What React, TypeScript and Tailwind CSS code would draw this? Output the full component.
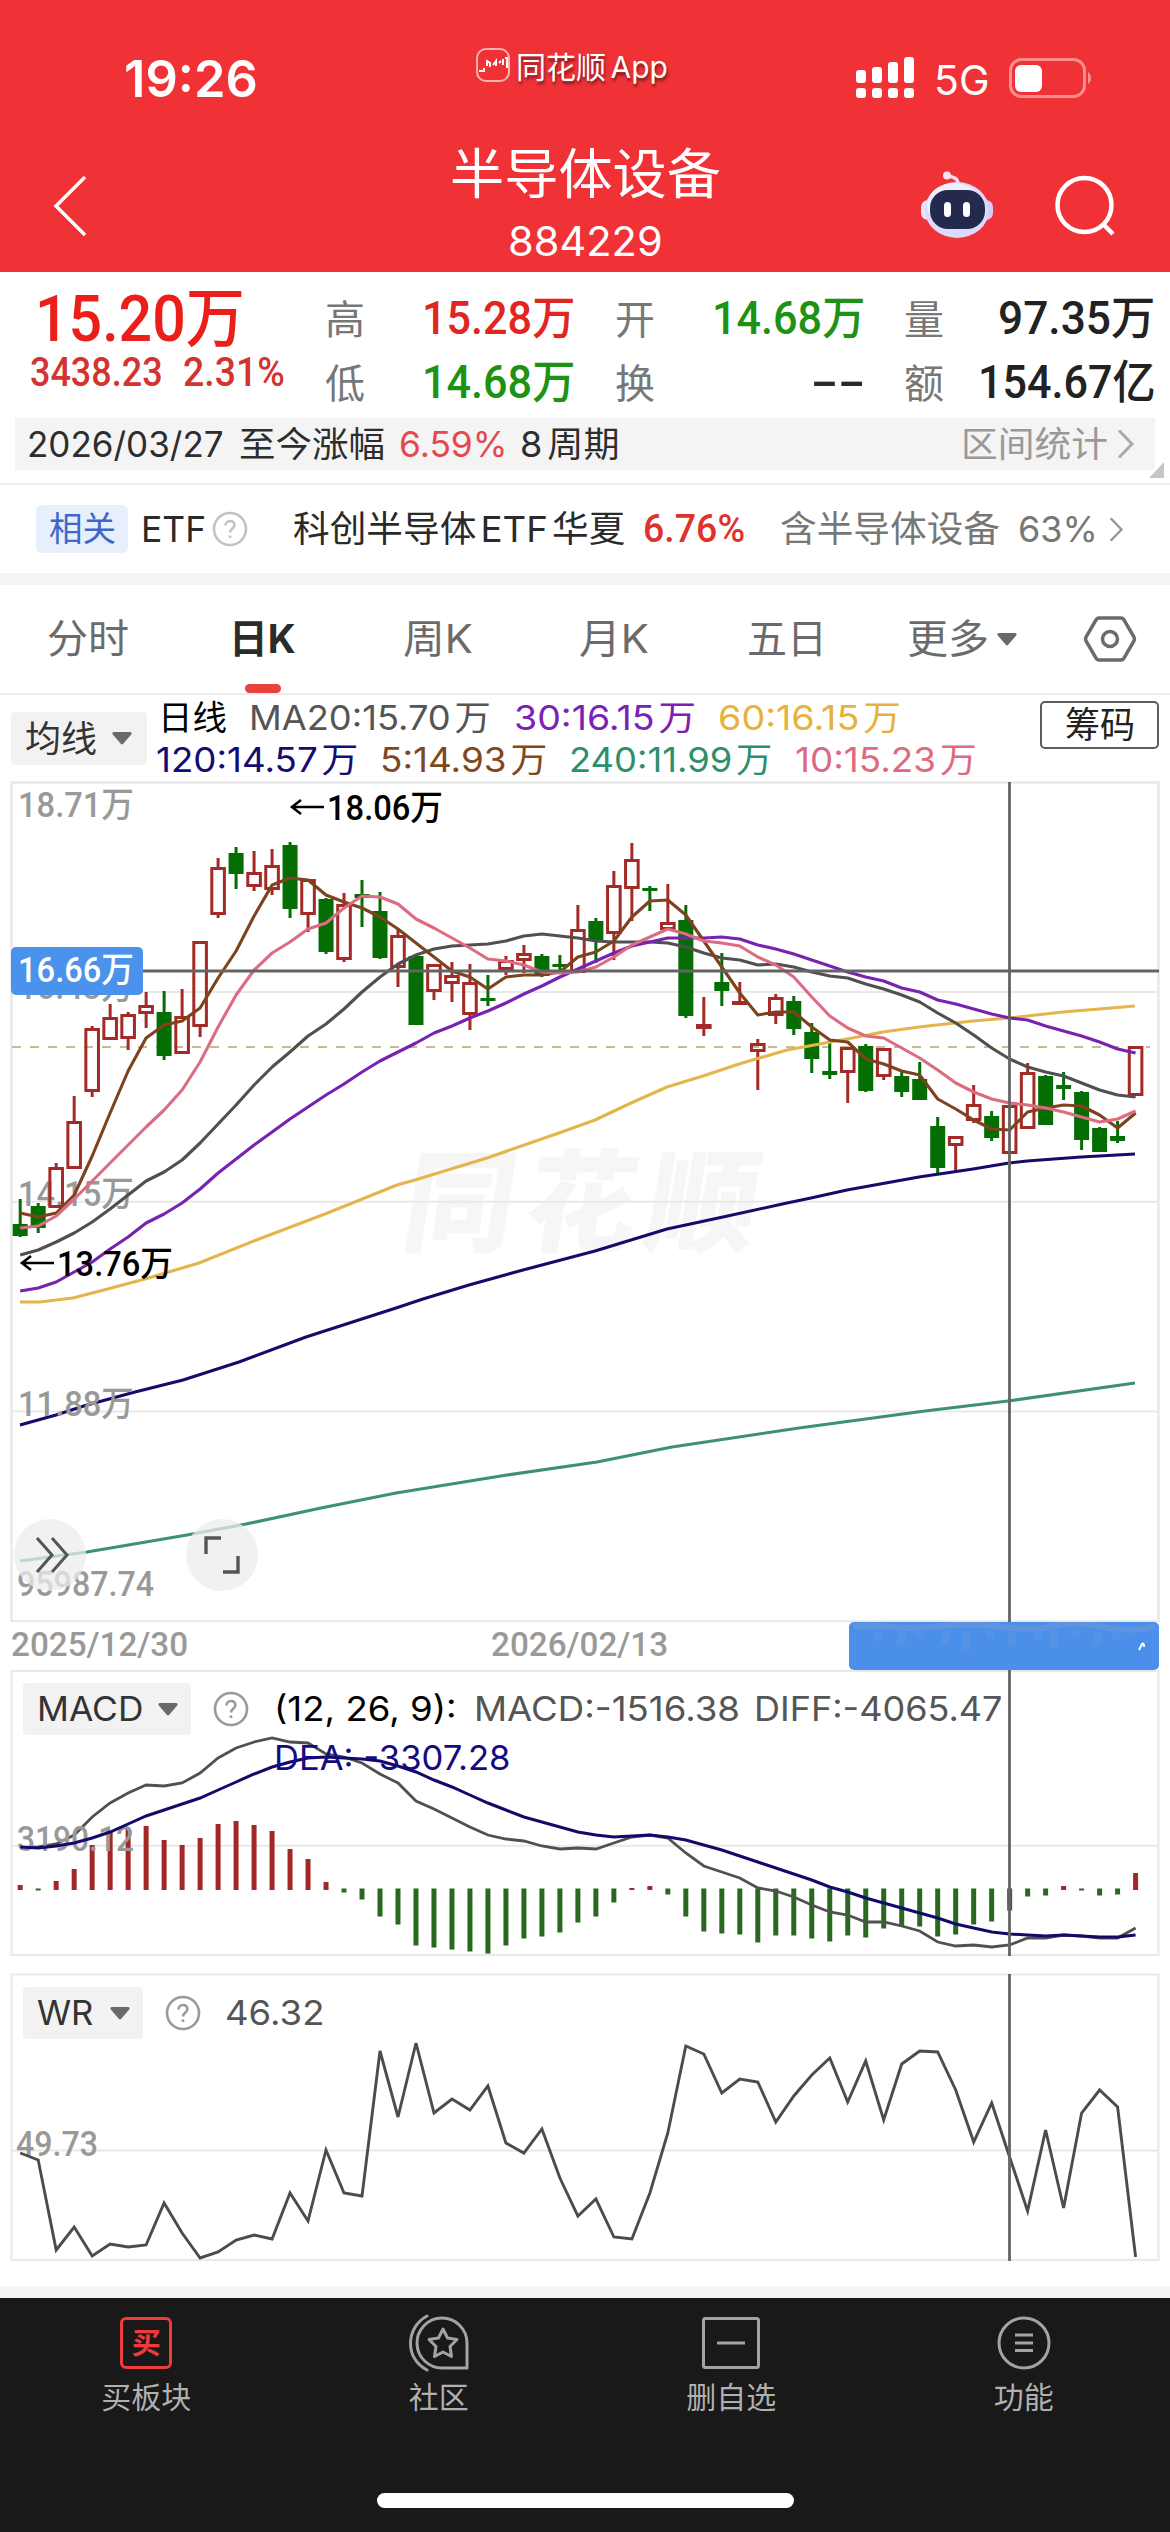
import React, { useLayoutEffect, useRef, useState } from 'react';

interface FitProps {
  w: number;
  className?: string;
  children: React.ReactNode;
}

// one line of text squeezed or stretched to a fixed width
function Fit({ w, className = '', children }: FitProps) {
  const ref = useRef<HTMLSpanElement>(null);
  const [scale, setScale] = useState(1);

  useLayoutEffect(() => {
    if (ref.current) setScale(w / ref.current.offsetWidth);
  }, [w, children]);

  return (
    <span className={'block shrink-0 whitespace-pre leading-none ' + className} style={{ width: w }}>
      <span ref={ref} className="inline-block origin-left" style={{ transform: `scaleX(${scale})` }}>
        {children}
      </span>
    </span>
  );
}

const STEP = 17.99;
const xAt = (i: number) => 20.2 + STEP * i;
const toPoints = (ys: number[]) => ys.map((y, i) => `${xAt(i).toFixed(1)},${y}`).join(' ');

// [up, bodyTop, bodyBottom, high, low]
const candles: number[][] = [
  [0, 444, 456, 419, 457], [0, 426, 448, 423, 453], [1, 387, 428, 383, 428], [1, 341, 389, 316, 389],
  [1, 248, 312, 246, 317], [1, 237, 260, 224, 260], [1, 234, 259, 232, 270], [1, 225, 234, 212, 248],
  [0, 232, 276, 211, 280], [1, 236, 274, 209, 274], [1, 161, 247, 161, 257], [1, 87, 135, 78, 138],
  [0, 73, 94, 67, 109], [1, 92, 107, 71, 111], [1, 85, 110, 69, 115], [0, 65, 129, 62, 138],
  [1, 99, 135, 99, 152], [0, 119, 172, 118, 174], [1, 124, 180, 113, 182], [0, 114, 118, 100, 147],
  [0, 131, 178, 112, 179], [1, 155, 188, 150, 207], [0, 176, 245, 176, 245], [1, 184, 212, 184, 220],
  [1, 195, 204, 182, 222], [1, 202, 235, 184, 250], [0, 218, 221, 195, 226], [1, 180, 190, 176, 195],
  [1, 173, 181, 165, 193], [0, 176, 196, 174, 197], [0, 184, 187, 175, 190], [1, 149, 193, 125, 193],
  [0, 141, 161, 138, 183], [1, 105, 154, 91, 180], [1, 79, 109, 63, 141], [0, 108, 111, 106, 131],
  [1, 142, 150, 104, 150], [0, 140, 236, 125, 238], [1, 244, 249, 217, 256], [0, 202, 211, 173, 226],
  [1, 221, 224, 202, 225], [1, 263, 272, 259, 310], [1, 217, 236, 214, 244], [0, 221, 249, 216, 255],
  [0, 252, 279, 243, 293], [0, 291, 295, 263, 299], [1, 267, 293, 267, 323], [0, 266, 311, 264, 312],
  [1, 268, 297, 268, 300], [0, 296, 312, 290, 317], [0, 299, 320, 282, 320], [0, 346, 388, 337, 395],
  [1, 356, 366, 356, 393], [1, 324, 341, 305, 343], [0, 336, 358, 331, 361], [1, 325, 374, 325, 374],
  [1, 292, 349, 283, 349], [0, 296, 345, 295, 345], [0, 305, 309, 292, 320], [0, 312, 360, 311, 370],
  [0, 348, 372, 347, 372], [0, 356, 361, 341, 363], [1, 266, 316, 266, 316],
];

const ma5 = [433, 437, 433, 415, 376, 333, 291, 258, 245, 241, 228, 198, 171, 136, 105, 98, 100, 115, 122, 128, 137, 149, 163, 177, 191, 197, 209, 197, 195, 195, 192, 177, 172, 161, 137, 121, 120, 135, 161, 187, 213, 235, 232, 232, 247, 260, 262, 279, 284, 291, 295, 319, 329, 340, 349, 350, 332, 328, 325, 326, 335, 348, 333];
const ma10 = [448, 446, 436, 419, 401, 383, 365, 347, 330, 310, 282, 247, 215, 190, 173, 162, 149, 143, 128, 116, 117, 124, 139, 148, 158, 168, 179, 181, 185, 192, 193, 192, 187, 177, 165, 157, 149, 154, 161, 163, 166, 177, 185, 197, 217, 236, 248, 256, 258, 268, 278, 290, 303, 312, 319, 323, 325, 328, 332, 337, 342, 339, 331];
const ma20 = [475, 470, 462, 453, 442, 429, 415, 401, 392, 380, 363, 344, 325, 305, 287, 272, 256, 244, 229, 212, 197, 184, 175, 169, 166, 165, 164, 161, 156, 154, 156, 158, 161, 162, 162, 162, 163, 167, 173, 178, 180, 185, 184, 187, 192, 196, 198, 204, 209, 215, 222, 233, 243, 255, 268, 279, 287, 292, 296, 303, 310, 315, 317];
const ma30 = [511, 508, 502, 492, 482, 469, 457, 443, 434, 423, 409, 393, 379, 365, 352, 339, 327, 315, 304, 292, 281, 272, 263, 253, 246, 238, 231, 223, 214, 206, 197, 189, 181, 173, 166, 162, 158, 158, 158, 157, 159, 165, 169, 174, 180, 186, 192, 197, 201, 208, 212, 220, 224, 229, 234, 238, 240, 246, 251, 256, 262, 269, 273];

const ma60 = '20,522 40,522 56,520 73,518 100,511 145,499 199,483 259,459 325,434 397,405 415,400 487,378 559,353 595,340 631,323 667,307 703,296 739,284 787,270 847,259 883,252 919,247 955,243 973,241 1009,238 1063,232 1135,226';
const ma120 = '20,645 56,635 87,625 135,612 183,600 239,582 306,557 396,528 423,519 469,505 523,490 595,471 667,449 723,437 787,423 811,418 847,410 919,397 973,389 1009,383 1027,381 1081,377 1135,374';
const ma240 = '20,781 87,772 187,755 246,744 321,728 396,713 507,695 597,682 672,667 799,648 925,631 1008,621 1135,603';

const bars = [4, -1, 8, 20, 44, 58, 60, 63, 49, 44, 51, 65, 68, 64, 58, 40, 30, 7, -3, -10, -27, -35, -56, -58, -60, -62, -64, -56, -49, -47, -43, -33, -27, -13, 1, 3, -5, -27, -42, -44, -45, -53, -46, -46, -49, -52, -46, -48, -39, -37, -37, -47, -45, -35, -32, -21, -7, -6, 3, -1, -6, -5, 16];
const diff = [188, 187, 184, 175, 157, 143, 133, 125, 126, 123, 113, 98, 88, 82, 78, 82, 83, 94, 97, 103, 114, 123, 141, 149, 158, 167, 175, 179, 181, 186, 189, 188, 189, 183, 177, 175, 178, 193, 206, 212, 218, 228, 231, 237, 245, 252, 255, 262, 262, 266, 271, 282, 286, 285, 287, 285, 278, 278, 275, 276, 278, 278, 268];
const dea = [187, 188, 186, 183, 178, 172, 164, 156, 150, 144, 138, 130, 122, 114, 107, 102, 98, 97, 98, 99, 101, 106, 112, 120, 127, 135, 143, 150, 157, 162, 167, 172, 175, 177, 176, 175, 177, 180, 185, 190, 196, 202, 208, 214, 220, 227, 232, 238, 243, 248, 253, 258, 264, 268, 272, 274, 275, 276, 275, 276, 277, 277, 275];
const wr = [193, 200, 290, 267, 296, 284, 287, 285, 243, 273, 298, 292, 280, 275, 279, 233, 261, 190, 233, 236, 91, 157, 83, 153, 139, 150, 126, 183, 193, 169, 218, 256, 239, 277, 279, 233, 173, 86, 94, 133, 119, 122, 162, 136, 115, 98, 142, 101, 160, 104, 91, 92, 130, 182, 143, 197, 251, 170, 248, 153, 130, 147, 297];

const tabs = [
  { label: '分时', w: 82, box: 'w-[175px]' },
  { label: '日K', w: 67, box: 'w-[175px]', active: true },
  { label: '周K', w: 70, box: 'w-[175px]' },
  { label: '月K', w: 70, box: 'w-[178px]' },
  { label: '五日', w: 80, box: 'w-[168px]' },
];

function Help({ className = '' }: { className?: string }) {
  return (
    <svg viewBox="0 0 36 36" className={'size-9 shrink-0 ' + className} fill="none" stroke="currentColor" strokeWidth="2.6">
      <circle cx="18" cy="18" r="16" />
      <path d="M13.5 14.5c0-6 9-6 9-.5 0 3.500-4.500 3.500-4.500 7.500M18 24.500v2.600" />
    </svg>
  );
}

function Caret({ className = '' }: { className?: string }) {
  return (
    <svg viewBox="0 0 20 13" className={'h-[13px] w-5 shrink-0 ' + className}>
      <path d="M2 0h16a1.500 1.500 0 0 1 1.200 2.500L11 12a1.500 1.500 0 0 1-2 0L.8 2.500A1.500 1.500 0 0 1 2 0z" fill="#6a6a6a" />
    </svg>
  );
}

function Chevron({ className = '' }: { className?: string }) {
  return (
    <svg viewBox="0 0 20 30" className={'shrink-0 ' + className} fill="none" stroke="currentColor" strokeWidth="3">
      <path d="M3 1.500l13 13.500L3 28.500" />
    </svg>
  );
}

function StatusBar() {
  return (
    <div className="flex h-[118px] items-start text-white">
      <Fit w={134} className="ml-[124px] mt-[53px] text-[51px] font-semibold">19:26</Fit>
      <svg viewBox="0 0 34 34" className="ml-[218px] mt-[48px] size-[34px]" fill="none" stroke="#fbb3b0">
        <rect x="1" y="1" width="32" height="32" rx="9" strokeWidth="2" />
        <path d="M3 23h5v-3M11 18v-5l3 2v4M17 17l3-4v5M23 15l2-2M27 11v6M29 10h2v10" stroke="#fff" strokeWidth="2" />
      </svg>
      <Fit w={152} className="ml-[6px] mt-[52px] text-[30px] [text-shadow:1px_3px_3px_rgba(0,0,0,0.5)] [word-spacing:-4px]">同花顺 App</Fit>
      <svg viewBox="0 0 60 42" className="ml-[188px] mt-[57px] h-[42px] w-[60px]" fill="#fff">
        <rect x="0" y="13" width="10" height="13" rx="3" />
        <rect x="16" y="10" width="10" height="16" rx="3" />
        <rect x="32" y="5" width="10" height="21" rx="3" />
        <rect x="48" y="0" width="10" height="26" rx="3" />
        <rect x="0" y="31" width="10" height="10" rx="3" />
        <rect x="16" y="31" width="10" height="10" rx="3" />
        <rect x="32" y="31" width="10" height="10" rx="3" />
        <rect x="48" y="31" width="10" height="10" rx="3" />
      </svg>
      <Fit w={56} className="ml-[18px] mt-[60px] text-[41px]">5G</Fit>
      <svg viewBox="0 0 84 40" className="ml-[19px] mt-[58px] h-[40px] w-[84px]" fill="none">
        <rect x="1.500" y="1.500" width="74" height="37" rx="11" stroke="#fa8f8f" strokeWidth="3" />
        <path d="M79 14c4 2 4 10 0 12z" fill="#fa8f8f" />
        <rect x="6" y="7" width="27" height="27" rx="6" fill="#fff" />
      </svg>
    </div>
  );
}

function Robot() {
  return (
    <svg viewBox="0 0 74 68" className="h-[68px] w-[74px]">
      <path d="M38 13c0-6-5-7-9-8" fill="none" stroke="#fbdcea" strokeWidth="3.500" />
      <circle cx="27" cy="4.500" r="4" fill="#fbe4ef" />
      <rect x="1" y="29" width="14" height="20" rx="7" fill="#e9e4fb" />
      <rect x="59" y="29" width="14" height="20" rx="7" fill="#d3ccfb" />
      <ellipse cx="37" cy="39" rx="32" ry="28" fill="#dcd9fa" />
      <ellipse cx="34" cy="34" rx="27" ry="22" fill="#f1eefd" />
      <rect x="10" y="19" width="55" height="39" rx="18" fill="#232a4d" />
      <rect x="24" y="31" width="7" height="15" rx="3.500" fill="#fff" />
      <rect x="43" y="31" width="7" height="15" rx="3.500" fill="#fff" />
    </svg>
  );
}

function Header() {
  return (
    <header className="h-[272px] bg-[#f03237]">
      <StatusBar />
      <div className="flex text-white">
        <svg viewBox="0 0 36 64" className="ml-[52px] mt-[56px] h-[64px] w-[36px]" fill="none" stroke="#fff" strokeWidth="3.500">
          <path d="M33 3L4 32l29 29" />
        </svg>
        <div className="ml-[357px] flex w-[280px] flex-col items-center">
          <Fit w={271} className="mt-[30px] text-[54px]">半导体设备</Fit>
          <Fit w={155} className="mt-[19px] text-[41px]">884229</Fit>
        </div>
        <div className="ml-[195px] mt-[53px]">
          <Robot />
        </div>
        <svg viewBox="0 0 64 64" className="ml-[59px] mt-[56px] size-16" fill="none" stroke="#fff" strokeWidth="4.500">
          <circle cx="31.500" cy="31" r="27" />
          <path d="M50 50l10 10" />
        </svg>
      </div>
    </header>
  );
}

interface QuoteProps {
  label: string;
  value: string;
  w: number;
  color: string;
  box: string;
}

function Quote({ label, value, w, color, box }: QuoteProps) {
  return (
    <div className={'flex h-16 items-center justify-between ' + box}>
      <Fit w={40} className="mt-[3px] text-[40px] text-[#777]">{label}</Fit>
      <Fit w={w} className={'font-[Roboto,Noto_Sans_CJK_SC,sans-serif] text-[46px] font-medium ' + color}>{value}</Fit>
    </div>
  );
}

function QuotePanel() {
  return (
    <section className="h-[211px]">
      <div className="flex h-[146px]">
        <div className="w-[325px] font-[Roboto,Noto_Sans_CJK_SC,sans-serif] font-medium">
          <Fit w={210} className="ml-[35px] mt-[15px] text-[65px] text-[#ea1f1a]">15.20万</Fit>
          <div className="mt-[1px] flex text-[40px] text-[#d3342f]">
            <Fit w={133} className="ml-[30px]">3438.23</Fit>
            <Fit w={102} className="ml-[20px]">2.31%</Fit>
          </div>
        </div>
        <div className="pt-[14px]">
          <Quote label="高" value="15.28万" w={153} color="text-[#e0261f]" box="w-[250px]" />
          <Quote label="低" value="14.68万" w={153} color="text-[#1c9314]" box="w-[250px]" />
        </div>
        <div className="ml-[40px] pt-[14px]">
          <Quote label="开" value="14.68万" w={153} color="text-[#1c9314]" box="w-[250px]" />
          <Quote label="换" value="--" w={54} color="text-[#2a2a2a]" box="w-[250px]" />
        </div>
        <div className="ml-[39px] pt-[14px]">
          <Quote label="量" value="97.35万" w={157} color="text-[#222]" box="w-[251px]" />
          <Quote label="额" value="154.67亿" w={178} color="text-[#222]" box="w-[252px]" />
        </div>
      </div>
      <div className="relative mx-[15px] flex h-[52px] items-center bg-[#f4f4f4] text-[35px] text-[#2d2d2d]">
        <Fit w={197} className="ml-[12px]">2026/03/27</Fit>
        <Fit w={146} className="ml-[15px]">至今涨幅</Fit>
        <Fit w={108} className="ml-[14px] text-[#e4484c]">6.59%</Fit>
        <Fit w={100} className="ml-[13px] [word-spacing:-5px]">8 周期</Fit>
        <Fit w={147} className="ml-[341px] text-[#999]">区间统计</Fit>
        <Chevron className="ml-[8px] h-[30px] w-5 text-[#aaa]" />
        <svg viewBox="0 0 15 16" className="absolute -right-[9px] bottom-[-8px] h-4 w-[15px]">
          <path d="M15 0v16H0z" fill="#c6c6c6" />
        </svg>
      </div>
    </section>
  );
}

function RelatedRow() {
  return (
    <section className="flex h-[90px] items-center border-t-2 border-[#ececec] text-[36px] text-[#2a2a2a]">
      <div className="ml-[36px] flex h-[48px] w-[92px] items-center justify-center rounded-md bg-[#e8effc] text-[34px] text-[#3d67c9]">
        <Fit w={67}>相关</Fit>
      </div>
      <Fit w={65} className="ml-[13px]">ETF</Fit>
      <Help className="ml-[6px] text-[#c2c2c2]" />
      <Fit w={332} className="ml-[45px] [word-spacing:-6px]">科创半导体 ETF 华夏</Fit>
      <Fit w={102} className="ml-[18px] font-[Roboto,sans-serif] text-[39px] font-medium text-[#e0322c]">6.76%</Fit>
      <Fit w={220} className="ml-[35px] text-[#777]">含半导体设备</Fit>
      <Fit w={80} className="ml-[18px] text-[#777]">63%</Fit>
      <Chevron className="ml-[10px] h-[25px] w-[17px] text-[#999]" />
    </section>
  );
}

function TabBar() {
  return (
    <nav className="flex h-[110px] items-center border-b-2 border-[#ececec] text-[40px] text-[#6b6b6b]">
      {tabs.map((t) => (
        <div key={t.label} className={'relative flex h-full items-center justify-center ' + t.box}>
          <Fit w={t.w} className={t.active ? 'font-bold text-[#2b2b2b]' : ''}>{t.label}</Fit>
          {t.active && <i className="absolute bottom-0 h-[9px] w-[36px] rounded-full bg-[#e8433a]" />}
        </div>
      ))}
      <Fit w={82} className="ml-[36px]">更多</Fit>
      <Caret className="ml-[8px]" />
      <svg viewBox="0 0 54 46" className="ml-[66px] h-[46px] w-[54px]" fill="none" stroke="#6b6b6b" strokeWidth="3.500">
        <path d="M16 2h22q2 0 3 2l10 17q1 2 0 4L41 42q-1 2-3 2H16q-2 0-3-2L3 25q-1-2 0-4L13 4q1-2 3-2z" />
        <circle cx="27" cy="23" r="7.500" />
      </svg>
    </nav>
  );
}

function Averages() {
  return (
    <section className="flex h-[86px] text-[34px]">
      <div className="ml-[11px] mt-[17px] flex h-[53px] w-[136px] items-center rounded bg-[#f2f2f2] text-[#333]">
        <Fit w={72} className="ml-[14px] text-[36px]">均线</Fit>
        <Caret className="ml-[15px]" />
      </div>
      <div className="ml-[11px] w-[882px] [word-spacing:-6px]">
        <div className="mt-[6px] flex h-[34px] items-center">
          <Fit w={69} className="text-black">日线</Fit>
          <Fit w={242} className="ml-[22px] text-[#555]">MA20:15.70 万</Fit>
          <Fit w={182} className="ml-[23px] text-[#7b22b5]">30:16.15 万</Fit>
          <Fit w={183} className="ml-[22px] text-[#e6b23c]">60:16.15 万</Fit>
        </div>
        <div className="mt-[8px] flex h-[34px] items-center">
          <Fit w={202} className="-ml-[2px] text-[#140b73]">120:14.57 万</Fit>
          <Fit w={167} className="ml-[22px] text-[#81481d]">5:14.93 万</Fit>
          <Fit w={203} className="ml-[22px] text-[#2e8f6c]">240:11.99 万</Fit>
          <Fit w={182} className="ml-[23px] text-[#dd6a80]">10:15.23 万</Fit>
        </div>
      </div>
      <div className="mt-[6px] flex h-[48px] w-[119px] items-center justify-center rounded-[5px] border-2 border-[#5c5c5c] text-[#222]">
        <Fit w={70} className="text-[36px]">筹码</Fit>
      </div>
    </section>
  );
}

interface AxisProps {
  x: number;
  y: number;
  w: number;
  fill?: string;
  children: string;
}

function Axis({ x, y, w, fill = '#999', children }: AxisProps) {
  return (
    <text x={x} y={y} fill={fill} textLength={w} lengthAdjust="spacingAndGlyphs" className="font-[Roboto,Noto_Sans_CJK_SC,sans-serif] text-[35px] font-medium">
      {children}
    </text>
  );
}

function KChart() {
  return (
    <section className="relative h-[841px]">
      <svg viewBox="0 1 1170 841" className="block h-[841px] w-[1170px]" fill="none">
        <text x="400" y="463" textLength="354" fontWeight="900" fill="#f6f6f6" transform="translate(72 0) skewX(-9)" className="font-[Noto_Sans_CJK_SC,sans-serif] text-[111px]">同花顺</text>
        <g stroke="#e9e9e9" strokeWidth="2">
          <rect x="11.500" y="2.500" width="1147" height="839" strokeWidth="2.500" />
          <path d="M12 212h1147M12 421.700h1147M12 631.500h1147" />
        </g>
        <path d="M12 267h1138" stroke="#c9b894" strokeWidth="1.800" strokeDasharray="9 9" />

        <Axis x={18} y={37} w={116}>18.71万</Axis>
        <Axis x={18} y={219} w={116}>16.43万</Axis>
        <Axis x={18} y={426} w={116}>14.15万</Axis>
        <Axis x={17} y={816} w={137}>95987.74</Axis>

        {candles.map(([up, top, bottom, high, low], i) => {
          const x = xAt(i);
          const color = up ? '#a32a26' : '#046d04';
          return (
            <g key={i} stroke={color}>
              <path d={`M${x} ${high}V${top}M${x} ${bottom}V${low}`} strokeWidth="3" />
              {up ? (
                <rect x={x - 6.3} y={top + 1.5} width="12.600" height={Math.max(bottom - top - 3, 1)} strokeWidth="3" />
              ) : (
                <rect x={x - 7.5} y={top} width="15" height={bottom - top} fill={color} stroke="none" />
              )}
            </g>
          );
        })}

        <g strokeWidth="3.100" strokeLinejoin="round">
          <polyline points={ma240} stroke="#3c9175" />
          <polyline points={ma120} stroke="#140b6b" />
          <polyline points={ma60} stroke="#e4b54b" />
          <polyline points={toPoints(ma20)} stroke="#505050" />
          <polyline points={toPoints(ma30)} stroke="#7822b0" />
          <polyline points={toPoints(ma5)} stroke="#7c431c" />
          <polyline points={toPoints(ma10)} stroke="#dc6c82" />
        </g>
        <Axis x={18} y={636} w={116}>11.88万</Axis>

        <g stroke="#000" strokeWidth="2.600">
          <path d="M324 27h-32m9-7l-9 7 9 7" />
          <path d="M54 483H22m9-7l-9 7 9 7" />
        </g>
        <Axis x={327} y={40} w={116} fill="#000">18.06万</Axis>
        <Axis x={57} y={496} w={116} fill="#000">13.76万</Axis>

        <path d="M12 191h1147M1009.500 2v840" stroke="#646464" strokeWidth="2.800" />
        <rect x="11" y="167" width="132" height="48" rx="5" fill="#4a92ec" />
        <Axis x={18} y={202} w={116} fill="#fff">16.66万</Axis>
      </svg>
      <div className="absolute left-[14px] top-[738px] flex size-[72px] items-center justify-center rounded-full bg-[#ececec]/75">
        <svg viewBox="0 0 36 36" className="ml-[3px] size-9" fill="none" stroke="#555" strokeWidth="3">
          <path d="M3 1l15 17L3 35M18 1l15 17-15 17" />
        </svg>
      </div>
      <div className="absolute left-[186px] top-[738px] flex size-[72px] items-center justify-center rounded-full bg-[#ececec]/75">
        <svg viewBox="0 0 36 38" className="h-[38px] w-9" fill="none" stroke="#555" strokeWidth="3.400">
          <path d="M2 18V2h15M34 20v16H19" />
        </svg>
      </div>
    </section>
  );
}

function DateRow() {
  return (
    <div className="flex h-[48px] items-start font-[Roboto,sans-serif] text-[34px] text-[#999]">
      <Fit w={177} className="ml-[11px] mt-[5px] font-medium">2025/12/30</Fit>
      <Fit w={177} className="ml-[303px] mt-[5px] font-medium">2026/02/13</Fit>
      <div className="ml-[181px] h-[48px] w-[310px] overflow-hidden rounded-[5px] bg-[#4a90ea]">
        <svg viewBox="0 0 310 49" className="h-[49px] w-[310px]" fill="none">
          <path d="M4 4q20-1 40 1t50-1 60 1 50-1 50 1 52-1" stroke="#6b9adb" strokeWidth="6" opacity=".6" />
          <path d="M30 10v9M52 8v16M70 9v7M96 8v14M118 9v20M141 8v8M163 9v15M188 8v10M205 8v18M226 8v8M249 9v14M268 8v9" stroke="#5d94e2" strokeWidth="8" opacity=".5" />
          <path d="M290 28l3-6q2-2 2 3" stroke="#fff" strokeWidth="2" />
        </svg>
      </div>
    </div>
  );
}

function MacdPanel() {
  return (
    <section className="relative h-[286px] text-[34px]">
      <svg viewBox="0 10 1170 286" className="absolute inset-0 h-[286px] w-[1170px]" fill="none">
        <g stroke="#e9e9e9" strokeWidth="2">
          <rect x="11.500" y="11" width="1147" height="284" />
          <path d="M12 185.700h1147" />
        </g>
        {bars.map((v, i) => (
          <path key={i} d={`M${xAt(i)} ${v > 0 ? 230 : 228.500}v${v > 0 ? -v - 1 : -v + 1}`} stroke={v > 0 ? '#a12824' : '#29691f'} strokeWidth="5" />
        ))}
        <polyline points={toPoints(diff)} stroke="#505050" strokeWidth="2.800" />
        <Axis x={17} y={191} w={117}>3190.12</Axis>
        <polyline points={toPoints(dea)} stroke="#120a6b" strokeWidth="3" />
        <path d="M1009.500 10v286" stroke="#646464" strokeWidth="2.800" />
      </svg>
      <div className="relative flex items-center pt-[13px]">
        <div className="ml-[23px] flex h-[52px] w-[168px] items-center rounded bg-[#f2f2f2] text-[#333]">
          <Fit w={106} className="ml-[14px]">MACD</Fit>
          <Caret className="ml-[15px]" />
        </div>
        <Help className="ml-[22px] text-[#999]" />
        <Fit w={183} className="ml-[25px] text-black">(12, 26, 9):</Fit>
        <Fit w={266} className="ml-[17px] text-[#555]">MACD:-1516.38</Fit>
        <Fit w={249} className="ml-[14px] text-[#555]">DIFF:-4065.47</Fit>
      </div>
      <Fit w={236} className="relative ml-[274px] mt-[6px] text-[#140b80]">DEA: -3307.28</Fit>
    </section>
  );
}

function WrPanel() {
  return (
    <section className="relative mt-[17px] h-[288px] text-[34px]">
      <svg viewBox="0 13 1170 288" className="absolute inset-0 h-[288px] w-[1170px]" fill="none">
        <g stroke="#e9e9e9" strokeWidth="2">
          <rect x="11.500" y="14.500" width="1147" height="285.500" />
          <path d="M12 190.500h1147" />
        </g>
        <Axis x={16} y={196} w={82}>49.73</Axis>
        <polyline points={toPoints(wr)} stroke="#4c4c4c" strokeWidth="2.900" />
        <path d="M1009.500 14v287" stroke="#646464" strokeWidth="2.800" />
      </svg>
      <div className="relative flex items-center pt-[14px]">
        <div className="ml-[23px] flex h-[52px] w-[120px] items-center rounded bg-[#f2f2f2] text-[#333]">
          <Fit w={56} className="ml-[14px]">WR</Fit>
          <Caret className="ml-[17px]" />
        </div>
        <Help className="ml-[22px] text-[#999]" />
        <Fit w={100} className="ml-[24px] text-[#555]">46.32</Fit>
      </div>
    </section>
  );
}

const actions = [
  {
    label: '买板块',
    w: 90,
    icon: (
      <div className="flex size-[52px] items-center justify-center rounded-[6px] border-[3px] border-[#ee3b3b] text-[29px] font-bold leading-none text-[#f0393b]">买</div>
    ),
  },
  {
    label: '社区',
    w: 60,
    icon: (
      <svg viewBox="0 0 60 58" className="h-[58px] w-[60px]" fill="none" stroke="#a3a3a3" strokeWidth="3">
        <path d="M18 2C-4 14-4 45 18 56" strokeLinecap="round" />
        <path d="M58 54H34a25 25 0 1 1 24-25z" strokeLinejoin="round" />
        <path d="M34 15l4.500 9 9.500 1.500-7 7 1.500 10-8.500-4.500-8.500 4.500 1.500-10-7-7 9.500-1.500z" strokeLinejoin="round" />
      </svg>
    ),
  },
  {
    label: '删自选',
    w: 90,
    icon: (
      <svg viewBox="0 0 58 52" className="h-[52px] w-[58px]" fill="none" stroke="#a3a3a3" strokeWidth="3">
        <rect x="1.500" y="1.500" width="55" height="49" rx="2" />
        <path d="M15 26h28" />
      </svg>
    ),
  },
  {
    label: '功能',
    w: 60,
    icon: (
      <svg viewBox="0 0 54 54" className="size-[54px]" fill="none" stroke="#a3a3a3" strokeWidth="3">
        <circle cx="27" cy="27" r="25" />
        <path d="M18 19h18M18 27h18M18 34.500h18" />
      </svg>
    ),
  },
];

function BottomBar() {
  return (
    <footer className="h-[234px] bg-[#191919]">
      <div className="flex h-[195px]">
        {actions.map((a) => (
          <div key={a.label} className="flex flex-1 flex-col items-center pt-[15px]">
            <div className="flex h-[60px] items-center">{a.icon}</div>
            <Fit w={a.w} className="mt-[9px] text-[30px] text-[#b0b0b0]">{a.label}</Fit>
          </div>
        ))}
      </div>
      <div className="mx-auto h-[15px] w-[417px] rounded-full bg-white" />
    </footer>
  );
}

export default function App() {
  return (
    <div className="h-[2532px] w-[1170px] overflow-hidden bg-white font-[Inter,Noto_Sans_CJK_SC,sans-serif]">
      <Header />
      <QuotePanel />
      <RelatedRow />
      <div className="h-[12px] bg-[#f5f5f5]" />
      <TabBar />
      <Averages />
      <KChart />
      <DateRow />
      <MacdPanel />
      <WrPanel />
      <div className="mt-[25px] h-[12px] bg-[#f5f5f5]" />
      <BottomBar />
    </div>
  );
}
